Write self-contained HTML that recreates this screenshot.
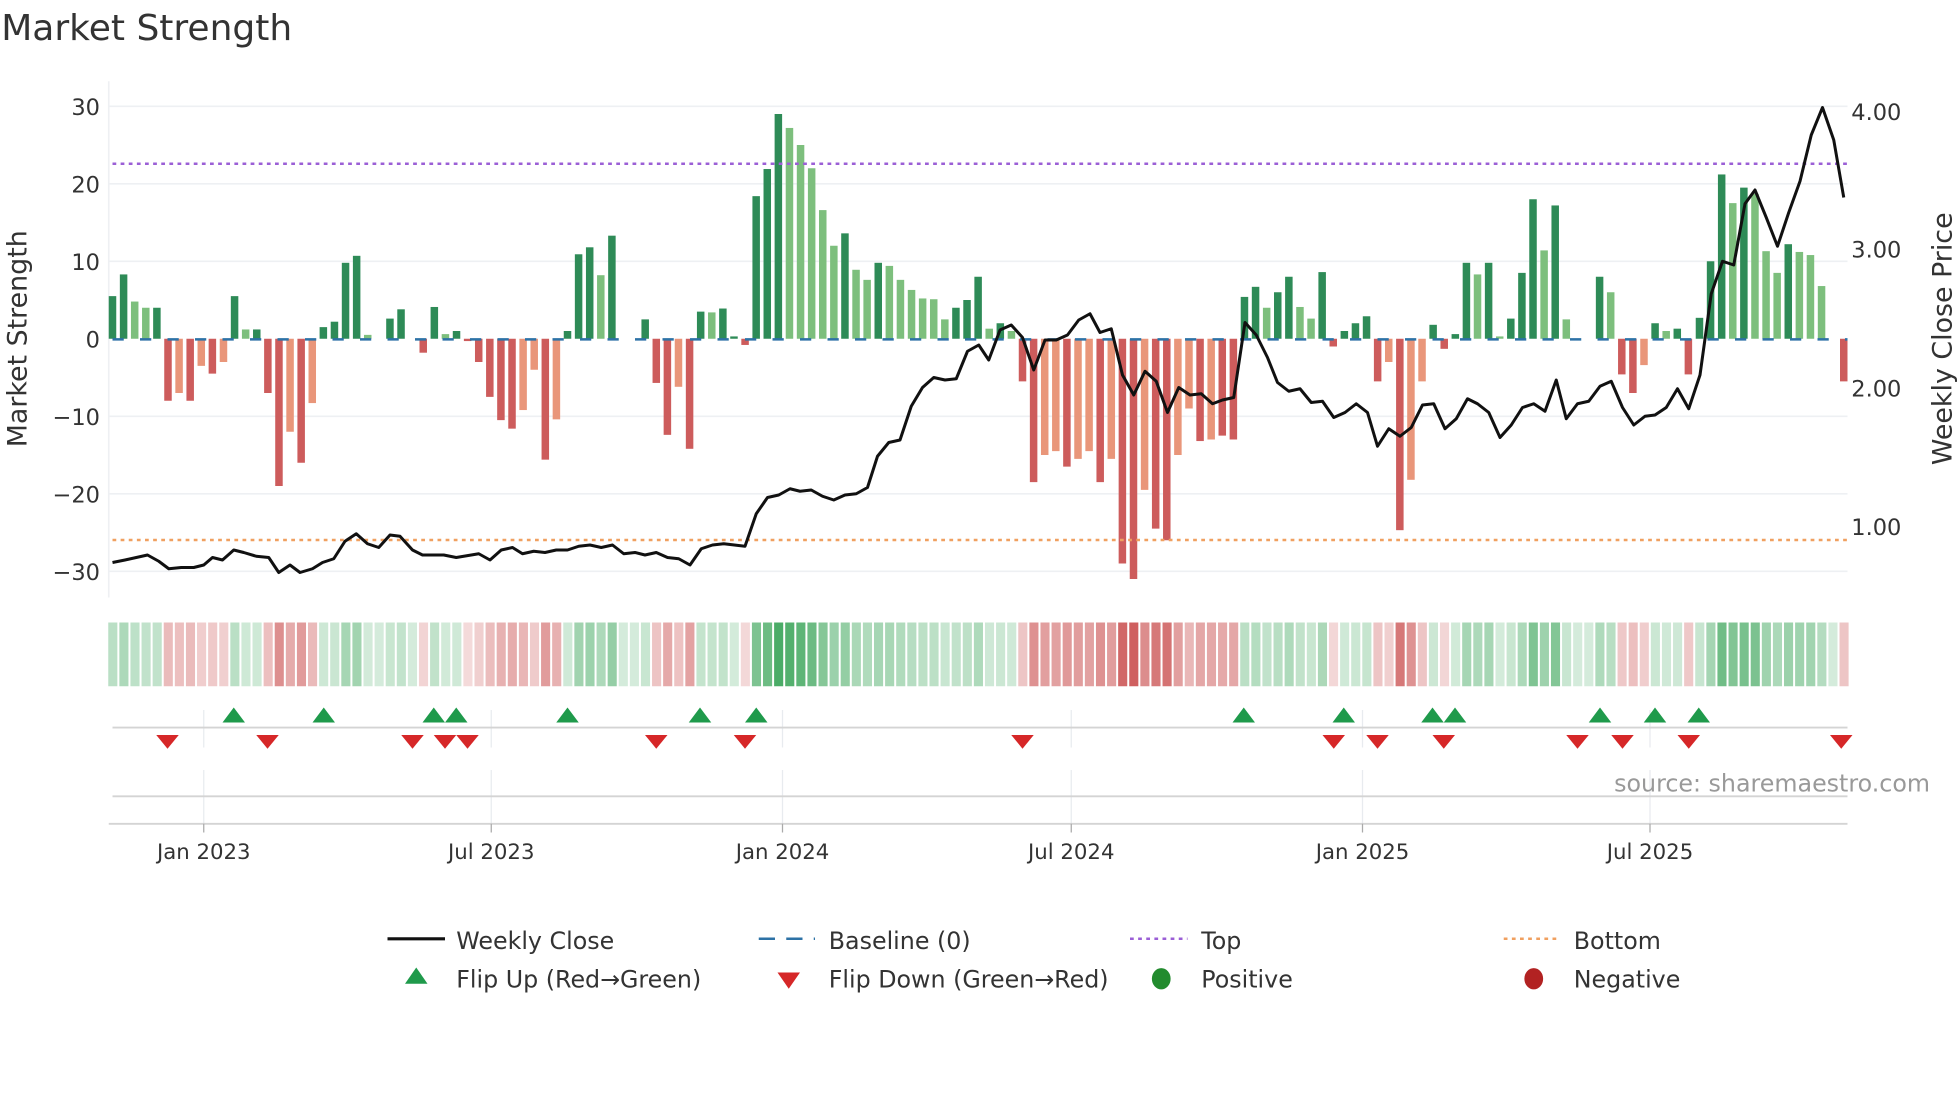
<!DOCTYPE html>
<html><head><meta charset="utf-8">
<style>
html,body{margin:0;padding:0;background:#fff;}
svg{display:block;font-family:"DejaVu Sans","Liberation Sans",sans-serif;}
</style></head>
<body>
<svg id="s" width="1960" height="1102" viewBox="0 0 1568 881.6" xmlns="http://www.w3.org/2000/svg">
<rect width="1568" height="882" fill="#fff"/>
<text x="1" y="32" font-size="28.8" fill="#333">Market Strength</text>
<g stroke="#eef0f3" stroke-width="1.3">
<line x1="87" x2="1478" y1="85" y2="85"/><line x1="87" x2="1478" y1="147" y2="147"/>
<line x1="87" x2="1478" y1="209" y2="209"/><line x1="87" x2="1478" y1="333" y2="333"/>
<line x1="87" x2="1478" y1="395" y2="395"/><line x1="87" x2="1478" y1="457" y2="457"/>
<line x1="87" x2="87" y1="65" y2="478"/>
</g>
<g font-size="18" fill="#333" text-anchor="end">
<text x="80" y="92">30</text><text x="80" y="154">20</text><text x="80" y="216">10</text>
<text x="80" y="278">0</text><text x="80" y="340">−10</text><text x="80" y="402">−20</text><text x="80" y="464">−30</text>
</g>
<g font-size="18" fill="#333">
<text x="1481" y="96">4.00</text><text x="1481" y="206">3.00</text><text x="1481" y="317">2.00</text><text x="1481" y="428">1.00</text>
</g>
<text transform="translate(21,271) rotate(-90)" font-size="21.5" fill="#333" text-anchor="middle">Market Strength</text>
<text transform="translate(1561,271) rotate(-90)" font-size="21.5" fill="#333" text-anchor="middle">Weekly Close Price</text>
<g id="bars"></g>
<line x1="90" x2="1478" y1="271.5" y2="271.5" stroke="#2d72a6" stroke-width="2" stroke-dasharray="9,13"/>
<line x1="90" x2="1478" y1="131" y2="131" stroke="#9b5fd6" stroke-width="2" stroke-dasharray="3,3.5"/>
<line x1="90" x2="1478" y1="432" y2="432" stroke="#f0a060" stroke-width="2" stroke-dasharray="3,3.5"/>
<polyline id="price" fill="none" stroke="#111" stroke-width="2.4" stroke-linejoin="round"/>
<g id="heat"></g>
<g stroke="#e8ebef" stroke-width="1">
<line x1="163" x2="163" y1="568" y2="598"/><line x1="393" x2="393" y1="568" y2="598"/><line x1="626" x2="626" y1="568" y2="598"/>
<line x1="857" x2="857" y1="568" y2="598"/><line x1="1090" x2="1090" y1="568" y2="598"/><line x1="1320" x2="1320" y1="568" y2="598"/>
<line x1="163" x2="163" y1="616" y2="659"/><line x1="393" x2="393" y1="616" y2="659"/><line x1="626" x2="626" y1="616" y2="659"/>
<line x1="857" x2="857" y1="616" y2="659"/><line x1="1090" x2="1090" y1="616" y2="659"/><line x1="1320" x2="1320" y1="616" y2="659"/>
</g>
<line x1="90" x2="1478" y1="582" y2="582" stroke="#d4d4d4" stroke-width="1.5"/>
<line x1="90" x2="1478" y1="637" y2="637" stroke="#d4d4d4" stroke-width="1.5"/>
<line x1="87" x2="1478" y1="659" y2="659" stroke="#d4d4d4" stroke-width="1.5"/>
<g stroke="#aaa" stroke-width="1">
<line x1="163" x2="163" y1="659" y2="666"/><line x1="393" x2="393" y1="659" y2="666"/><line x1="626" x2="626" y1="659" y2="666"/>
<line x1="857" x2="857" y1="659" y2="666"/><line x1="1090" x2="1090" y1="659" y2="666"/><line x1="1320" x2="1320" y1="659" y2="666"/>
</g>
<g font-size="17" fill="#333" text-anchor="middle">
<text x="163" y="687">Jan 2023</text><text x="393" y="687">Jul 2023</text><text x="626" y="687">Jan 2024</text>
<text x="857" y="687">Jul 2024</text><text x="1090" y="687">Jan 2025</text><text x="1320" y="687">Jul 2025</text>
</g>
<g id="marks"></g>
<text x="1544" y="633" font-size="19" fill="#999" text-anchor="end">source: sharemaestro.com</text>
<g font-size="19" fill="#333">
<line x1="310" x2="356" y1="751" y2="751" stroke="#111" stroke-width="2.5"/>
<text x="365" y="759">Weekly Close</text>
<line x1="607" x2="652" y1="751" y2="751" stroke="#2d72a6" stroke-width="2" stroke-dasharray="13,9"/>
<text x="663" y="759">Baseline (0)</text>
<line x1="904" x2="950" y1="751" y2="751" stroke="#9b5fd6" stroke-width="2" stroke-dasharray="3,3.5"/>
<text x="961" y="759">Top</text>
<line x1="1203" x2="1248" y1="751" y2="751" stroke="#f0a060" stroke-width="2" stroke-dasharray="3,3.5"/>
<text x="1259" y="759">Bottom</text>
<polygon points="333,774 324,787 342,787" fill="#1f9a4b"/>
<text x="365" y="790">Flip Up (Red→Green)</text>
<polygon points="622,778 640,778 631,791" fill="#d62728"/>
<text x="663" y="790">Flip Down (Green→Red)</text>
<ellipse cx="929" cy="783" rx="7.5" ry="8.5" fill="#228b2e"/>
<text x="961" y="790">Positive</text>
<ellipse cx="1227" cy="783" rx="7.5" ry="8.5" fill="#b22222"/>
<text x="1259" y="790">Negative</text>
</g>
</svg>
<script>
(function(){
var NS="http://www.w3.org/2000/svg";
var B=[[5.5,'d'],[8.3,'d'],[4.8,'l'],[4,'l'],[4,'d'],[-8,'r'],[-7,'s'],[-8,'r'],[-3.5,'s'],[-4.5,'r'],[-3,'s'],[5.5,'d'],[1.2,'l'],[1.2,'d'],[-7,'r'],[-19,'r'],[-12,'s'],[-16,'r'],[-8.3,'s'],[1.5,'d'],[2.2,'d'],[9.8,'d'],[10.7,'d'],[0.5,'l'],[0,'l'],[2.6,'d'],[3.8,'d'],[0,'d'],[-1.8,'r'],[4.1,'d'],[0.6,'l'],[1,'d'],[-0.3,'r'],[-3,'r'],[-7.5,'r'],[-10.5,'r'],[-11.6,'r'],[-9.2,'s'],[-4,'s'],[-15.6,'r'],[-10.4,'s'],[1,'d'],[10.9,'d'],[11.8,'d'],[8.2,'l'],[13.3,'d'],[0,'d'],[0,'d'],[2.5,'d'],[-5.7,'r'],[-12.4,'r'],[-6.2,'s'],[-14.2,'r'],[3.5,'d'],[3.4,'l'],[3.9,'d'],[0.3,'d'],[-0.8,'r'],[18.4,'d'],[21.9,'d'],[29,'d'],[27.2,'l'],[25,'l'],[22,'l'],[16.6,'l'],[12,'l'],[13.6,'d'],[8.9,'l'],[7.6,'l'],[9.8,'d'],[9.4,'l'],[7.6,'l'],[6.3,'l'],[5.2,'l'],[5.1,'l'],[2.5,'l'],[4,'d'],[5,'d'],[8,'d'],[1.3,'l'],[2,'d'],[1,'l'],[-5.5,'r'],[-18.5,'r'],[-15,'s'],[-14.5,'s'],[-16.5,'r'],[-15.5,'s'],[-14.5,'s'],[-18.5,'r'],[-15.5,'s'],[-29,'r'],[-31,'r'],[-19.5,'s'],[-24.5,'r'],[-26,'r'],[-15,'s'],[-9,'s'],[-13.2,'r'],[-13,'s'],[-12.5,'r'],[-13,'r'],[5.4,'d'],[6.7,'d'],[4,'l'],[6,'d'],[8,'d'],[4.1,'l'],[2.6,'l'],[8.6,'d'],[-1,'r'],[1,'d'],[2,'d'],[2.9,'d'],[-5.5,'r'],[-3,'s'],[-24.7,'r'],[-18.2,'s'],[-5.5,'s'],[1.8,'d'],[-1.3,'r'],[0.6,'d'],[9.8,'d'],[8.3,'l'],[9.8,'d'],[0.3,'l'],[2.6,'d'],[8.5,'d'],[18,'d'],[11.4,'l'],[17.2,'d'],[2.5,'l'],[0,'d'],[0,'d'],[8,'d'],[6,'l'],[-4.6,'r'],[-7,'r'],[-3.4,'s'],[2,'d'],[1,'l'],[1.3,'d'],[-4.6,'r'],[2.7,'d'],[10,'d'],[21.2,'d'],[17.5,'l'],[19.5,'d'],[18.7,'l'],[11.3,'l'],[8.5,'l'],[12.2,'d'],[11.2,'l'],[10.8,'l'],[6.8,'l'],[0,'l'],[-5.5,'r']];
var col={d:'#2e8b57',l:'#7dbf7d',r:'#cd5c5c',s:'#e9967a'};
var n=B.length, x0=90, step=(1475-90)/(n-1);
var gb=document.getElementById('bars'), gh=document.getElementById('heat');
function mk(tag,a,p){var e=document.createElementNS(NS,tag);for(var k in a)e.setAttribute(k,a[k]);p.appendChild(e);return e;}
for(var i=0;i<n;i++){
 var v=B[i][0],x=x0+i*step,h=Math.abs(v)*6.2;
 if(h>0.3) mk('rect',{x:x-3,y:v>0?271-h:271,width:6,height:h,fill:col[B[i][1]]},gb);
 var a=Math.min(1,0.22+0.75*Math.abs(v)/31);
 var c=v>=0?[60,165,90]:[205,90,90];
 var f='rgb('+c.map(function(q){return Math.round(255-(255-q)*a)}).join(',')+')';
 mk('rect',{x:x-4.4+1,y:498,width:step-1.6,height:51,fill:f},gh);
}
var P=[90,450,100,448,118,444,127,449,135,455,145,454,155,454,163,452,170,446,178,448,187,440,195,442,205,445,215,446,223,458,232,452,240,458,250,455,258,450,267,447,276,433,285,427,294,435,303,438,312,428,320,429,330,440,338,444,355,444,365,446,383,443,392,448,401,440,410,438,418,443,427,441,436,442,445,440,454,440,463,437,472,436,481,438,490,436,499,443,508,442,516,444,525,442,534,446,543,447,552,452,561,439,570,436,579,435,596,437,605,411,614,398,623,396,632,391,640,393,649,392,658,397,667,400,676,396,685,395,694,390,702,365,711,354,720,352,729,325,738,310,747,302,756,304,765,303,774,281,783,276,791,288,800,264,809,260,818,270,827,296,836,272,845,272,854,268,863,256,872,251,880,266,889,263,898,300,907,316,916,297,925,305,934,330,943,310,952,316,961,315,970,323,978,320,987,318,996,258,1005,268,1014,286,1022,306,1031,313,1040,311,1049,322,1058,321,1067,334,1076,330,1085,323,1094,330,1102,357,1111,343,1120,349,1129,342,1138,324,1147,323,1156,343,1165,335,1174,319,1182,323,1191,330,1200,350,1209,340,1218,326,1227,323,1236,329,1245,304,1253,335,1262,323,1271,321,1280,309,1289,305,1298,326,1307,340,1316,333,1324,332,1333,326,1342,311,1351,327,1360,300,1369,235,1378,209,1387,212,1396,163,1404,152,1413,174,1422,197,1431,170,1440,145,1449,108,1458,86,1467,112,1475,158];
var pts=[];for(var j=0;j<P.length;j+=2)pts.push(P[j]+','+P[j+1]);
document.getElementById('price').setAttribute('points',pts.join(' '));
var gm=document.getElementById('marks');
[187,259,347,365,454,560,605,995,1075,1146,1164,1280,1324,1359].forEach(function(x){
 mk('polygon',{points:x+',566 '+(x-9)+',578 '+(x+9)+',578',fill:'#1f9a4b'},gm);});
[134,214,330,356,374,525,596,818,1067,1102,1155,1262,1298,1351,1473].forEach(function(x){
 mk('polygon',{points:(x-9)+',588 '+(x+9)+',588 '+x+',599',fill:'#d62728'},gm);});
})();
</script>
</body></html>
